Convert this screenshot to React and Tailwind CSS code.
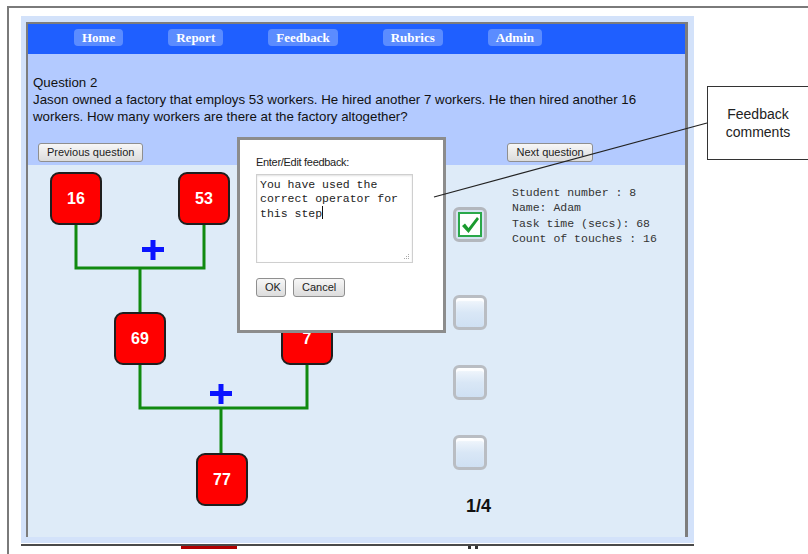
export default function App() {
  const navItems = ["Home", "Report", "Feedback", "Rubrics", "Admin"];
  const node =
    "absolute w-[52px] h-[53px] rounded-[9px] border-2 border-[#1e1e1e] bg-[#ff0000] text-white font-bold text-[16px] flex items-center justify-center";
  const unchecked =
    "w-[34px] h-[35px] rounded-[6px] border-[3px] border-[#b9bdc3] bg-linear-to-b from-[#f4f8fd] via-[#d9e7f6] to-[#cfe0f3] shadow-[inset_0_3px_1px_rgba(255,255,255,0.9)]";
  const btn =
    "h-[19px] px-[8px] rounded-[3px] border border-[#8f8f8f] bg-linear-to-b from-[#f7f7f7] to-[#dcdcdc] text-[11px] leading-[17px] text-[#222] whitespace-nowrap";
  return (
    <div className="relative w-[808px] h-[554px] overflow-hidden bg-white font-['Liberation_Sans',Arial,sans-serif] text-[#111]">
      <div className="ml-[7px] mt-[6px] h-[548px] border-t-2 border-l-2 border-[#7a7a7a] pl-[12px] pt-[8px]">
        <div className="w-[673px] bg-[#d3e2fa] pl-[5px] pr-[6px] pt-[6px] pb-[6px]">
          <div className="border-t-2 border-l-2 border-r-[3px] border-[#7d7d7d]">
            {/* nav */}
            <div className="h-[30px] bg-[#1f5fff] flex items-start pt-[5px] pl-[46px] gap-[45px]">
              {navItems.map((n) => (
                <div
                  key={n}
                  className="h-[17px] px-[8px] rounded-[4px] bg-[#5b8cff] text-white font-bold text-[13px] leading-[17px] font-['Liberation_Serif',serif]"
                >
                  {n}
                </div>
              ))}
            </div>
            {/* question */}
            <div className="h-[111px] bg-[#b3caff] pl-[5px] pt-[20px]">
              <div className="text-[13.3px] leading-[17px] text-[#111]">
                Question 2
                <br />
                Jason owned a factory that employs 53 workers. He hired another 7 workers. He then hired another 16
                <br />
                workers. How many workers are there at the factory altogether?
              </div>
              <div className="flex mt-[18px] pl-[5px]">
                <div className={btn}>Previous question</div>
                <div className={btn + " ml-[364px]"}>Next question</div>
              </div>
            </div>
            {/* content */}
            <div className="h-[372px] bg-[#deebf8] flex">
              <div className="relative w-[420px] h-full">
                <svg className="absolute inset-0" width="420" height="372">
                  <g stroke="#108a10" strokeWidth="3" fill="none">
                    <polyline points="48,60 48,103 176,103 176,60" />
                    <line x1="112" y1="103" x2="112" y2="147" />
                    <polyline points="112,200 112,243 279,243 279,200" />
                    <line x1="193" y1="243" x2="193" y2="288" />
                  </g>
                  <g fill="#0a14ff">
                    <rect x="114" y="82" width="22" height="5" />
                    <rect x="122.5" y="75" width="5" height="20" />
                    <rect x="182" y="226" width="22" height="5" />
                    <rect x="190.5" y="219" width="5" height="20" />
                  </g>
                </svg>
                <div className={node + " left-[22px] top-[7px]"}>16</div>
                <div className={node + " left-[150px] top-[7px]"}>53</div>
                <div className={node + " left-[86px] top-[147px]"}>69</div>
                <div className={node + " left-[253px] top-[147px]"}>7</div>
                <div className={node + " left-[168px] top-[288px]"}>77</div>
              </div>
              <div className="ml-[5px] w-[34px] flex flex-col pt-[42px]">
                <div className="w-[34px] h-[35px] rounded-[6px] border-[3px] border-[#b3b7bd] bg-[#d7e4f2] p-[2px]">
                  <div className="w-full h-full border-2 border-[#2aa84a] bg-white flex items-center justify-center">
                    <svg width="20" height="20" viewBox="0 0 20 20">
                      <path d="M2 11 L5 8.5 L8.5 13 L17 2 L19 4 L8.5 18 Z" fill="#1a9a2e" />
                    </svg>
                  </div>
                </div>
                <div className={unchecked + " mt-[53px]"} />
                <div className={unchecked + " mt-[35px]"} />
                <div className={unchecked + " mt-[35px]"} />
                <div className="mt-[25px] ml-[13px] text-[18px] leading-[22px] font-bold text-[#111] whitespace-nowrap">
                  1/4
                </div>
              </div>
              <div className="ml-[25px] pt-[20px] font-['Liberation_Mono',monospace] text-[11.5px] leading-[15.3px] text-[#333] whitespace-pre">
                {"Student number : 8\nName: Adam\nTask time (secs): 68\nCount of touches : 16"}
              </div>
            </div>
          </div>
        </div>
        <div className="mt-[1px] w-[673px] h-[2px] bg-[#4a4a4a]" />
        <div className="flex">
          <div className="ml-[160px] w-[56px] h-[3px] bg-[#b00000]" />
          <div className="ml-[231px] w-[3px] h-[3px] bg-[#333]" />
          <div className="ml-[4px] w-[3px] h-[3px] bg-[#333]" />
        </div>
      </div>

      {/* dialog */}
      <div className="absolute left-[237px] top-[137px] w-[209px] h-[196px] border-[3px] border-[#8c8c8c] bg-white pl-[16px] pt-[16px]">
        <div className="text-[11px] leading-[13px] text-[#222] tracking-[-0.3px]">Enter/Edit feedback:</div>
        <div className="relative mt-[5px] w-[157px] h-[89px] border border-[#cfcfcf] shadow-[inset_0_1px_2px_rgba(0,0,0,0.12)] px-[3px] pt-[3px] font-['Liberation_Mono',monospace] text-[11.5px] leading-[14px] text-[#222] whitespace-pre">
          {"You have used the\ncorrect operator for\nthis step"}
          <span className="inline-block w-[1px] h-[13px] bg-[#111] align-[-2px]" />
          <svg className="absolute right-[2px] bottom-[2px]" width="7" height="7" viewBox="0 0 7 7">
            <g fill="#aaa">
              <rect x="5" y="1" width="1" height="1" />
              <rect x="3" y="3" width="1" height="1" />
              <rect x="5" y="3" width="1" height="1" />
              <rect x="1" y="5" width="1" height="1" />
              <rect x="3" y="5" width="1" height="1" />
              <rect x="5" y="5" width="1" height="1" />
            </g>
          </svg>
        </div>
        <div className="flex gap-[7px] mt-[15px]">
          <div className={btn + " w-[30px] px-0 text-center"}>OK</div>
          <div className={btn + " w-[52px] px-0 text-center"}>Cancel</div>
        </div>
      </div>

      {/* callout */}
      <svg className="absolute left-0 top-0 pointer-events-none" width="808" height="554">
        <line x1="434" y1="197" x2="707" y2="123" stroke="#222" strokeWidth="1.2" />
      </svg>
      <div className="absolute left-[707px] top-[86px] w-[102px] h-[74px] border border-[#333] bg-white flex items-center justify-center text-center text-[14px] leading-[18px] text-[#222]">
        Feedback
        <br />
        comments
      </div>
    </div>
  );
}
